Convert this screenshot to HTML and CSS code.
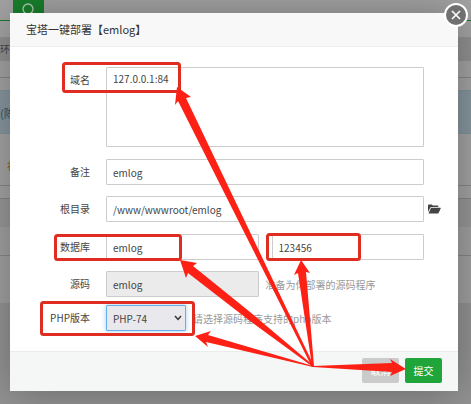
FILE: index.html
```html
<!DOCTYPE html>
<html lang="zh-CN">
<head>
    <meta charset="UTF-8">
    <meta name="viewport" content="width=device-width, initial-scale=1.0">
    <title>宝塔一键部署</title>
    <link rel="stylesheet" href="styles.css">
</head>
<body>
    <div class="page">
        <div class="page-search">
            <button class="search-btn" type="button" aria-label="搜索">
                <svg width="14" height="14" viewBox="0 0 14 14"><circle cx="6" cy="6" r="5"/><path d="M9.6 9.6L13.4 13.4"/></svg>
            </button>
        </div>
        <div class="page-gap"></div>
        <div class="page-tabs">环境</div>
        <div class="page-line"></div>
        <div class="page-tip">(陈</div>
        <div class="page-type">初</div>
        <div class="page-head"></div>
        <div class="page-row"></div>
        <div class="page-row tall"></div>
        <div class="page-rest"></div>
    </div>

    <div class="dialog" role="dialog" aria-labelledby="title">
        <button class="close" type="button" aria-label="关闭">
            <svg width="10" height="10" viewBox="0 0 10 10"><path d="M1 1L9 9M9 1L1 9"/></svg>
        </button>
        <h1 class="dialog-title" id="title">宝塔一键部署【emlog】</h1>
        <form>
            <div class="fields">
                <div class="line line-domain">
                    <label for="domain">域名</label>
                    <textarea id="domain">127.0.0.1:84</textarea>
                </div>
                <div class="line">
                    <label for="remark">备注</label>
                    <input class="wide" id="remark" type="text" value="emlog">
                </div>
                <div class="line line-path">
                    <label for="path">根目录</label>
                    <input class="wide" id="path" type="text" value="/www/wwwroot/emlog">
                    <svg class="folder" width="13" height="10" viewBox="0 0 13 10">
                        <path d="M0 8V1.4Q0 .6.8.6H3.8L4.8 1.6H9.6Q10.4 1.6 10.4 2.4V3H3.4Q2.7 3 2.4 3.6Z"/>
                        <path d="M.5 9.4L2.8 4.3Q3 3.8 3.6 3.8H12.4Q13 3.8 12.7 4.4L10.7 8.8Q10.4 9.4 9.8 9.4Z"/>
                    </svg>
                </div>
                <div class="line">
                    <label for="db">数据库</label>
                    <input class="half" id="db" type="text" value="emlog">
                    <input class="half" id="dbpass" type="text" value="123456" aria-label="数据库密码">
                </div>
                <div class="line line-source">
                    <label for="source">源码</label>
                    <input class="half" id="source" type="text" value="emlog" disabled>
                    <span class="note">准备为你部署的源码程序</span>
                </div>
                <div class="line">
                    <label for="php">PHP版本</label>
                    <span class="select">
                        <select id="php"><option>PHP-74</option></select>
                        <svg width="8" height="6" viewBox="0 0 8 6"><path d="M1 1L4 4.4L7 1"/></svg>
                    </span>
                    <span class="note">请选择源码程序支持的php版本</span>
                </div>
            </div>
            <div class="buttons">
                <button class="btn cancel" type="button">取消</button>
                <button class="btn submit" type="button">提交</button>
            </div>
        </form>
    </div>

    <svg class="marks" width="471" height="404" viewBox="0 0 471 404">
        <g class="boxes">
            <rect x="63.5" y="63.5" width="116" height="28" rx="2"/>
            <rect x="55.5" y="235.5" width="125" height="24" rx="2"/>
            <rect x="267.5" y="234.5" width="92" height="25" rx="2"/>
            <rect x="41.5" y="302.5" width="152" height="32" rx="2"/>
        </g>
        <g class="arrows">
            <path d="M177 87L191 97L186 98L314 366L312 367L178 101L175 105Z"/>
            <path d="M180 260L197 263L193 266L250 312L314 366L313 367L250 321L188 273L186 278Z"/>
            <path d="M301 260L310 273L306 272L314 366L312 366L298 273L294 275Z"/>
            <path d="M195 336L211 331L208 335L313 366L313 367L206 342L208 347Z"/>
            <path d="M406 369L390 376L392 372L313 367L313 366L392 363L390 359Z"/>
        </g>
    </svg>
</body>
</html>
```
FILE: styles.css
```css
* {
    box-sizing: border-box;
}
body {
    margin: 0;
    font-family: "Noto Sans CJK SC", sans-serif;
    font-size: 10px;
    color: #444;
    overflow: hidden;
}
button, input, select, textarea {
    font: inherit;
    color: inherit;
}

/* page behind the dialog */
.page {
    display: flex;
    flex-direction: column;
    min-height: 100vh;
    background: #a3a3a3;
}
.page-search {
    height: 21px;
    padding-left: 13px;
    border-bottom: 1px solid #1a7a2c;
}
.search-btn {
    display: block;
    width: 31px;
    height: 20px;
    padding: 0;
    border: 0;
    background: #17802b;
}
.search-btn svg {
    display: block;
    margin: 0 auto;
    fill: none;
    stroke: #b5c9b8;
    stroke-width: 1.3;
}
.page-gap {
    height: 16px;
}
.page-tabs {
    height: 24px;
    line-height: 24px;
    background: #919191;
}
.page-line {
    height: 29px;
    background: linear-gradient(#a3a3a3 16px, #858585 16px, #858585 17px, #a3a3a3 17px);
}
.page-tip {
    height: 44px;
    line-height: 44px;
    font-size: 11px;
    color: #2c5266;
    background: #87969e;
    border: solid #7d939c;
    border-width: 1px 0;
}
.page-type {
    height: 52px;
    padding: 24px 0 0 7px;
    color: #9a5a14;
    border-bottom: 1px solid #858585;
}
.page-head {
    height: 13px;
    border-bottom: 1px solid #858585;
}
.page-row {
    height: 28px;
    background: #979797;
}
.page-row.tall {
    height: 76px;
    background: linear-gradient(#a0a0a0 28px, #868686 28px, #868686 29px, #a0a0a0 29px);
}
.page-rest {
    flex: 1;
    background: #939393;
}

.dialog {
    position: absolute;
    top: 13px;
    left: 10px;
    right: 13px;
    background: #fff;
    box-shadow: 1px 1px 40px rgba(0, 0, 0, .3);
}
.close {
    position: absolute;
    top: -10px;
    right: -10px;
    display: flex;
    align-items: center;
    justify-content: center;
    width: 24px;
    height: 24px;
    padding: 0;
    border: 2px solid #fff;
    border-radius: 50%;
    background: #707070;
}
.close svg {
    fill: none;
    stroke: #fff;
    stroke-width: 1.6;
}
.dialog-title {
    height: 34px;
    margin: 0;
    padding-left: 16px;
    line-height: 33px;
    font-size: 11px;
    font-weight: normal;
    color: #333;
    background: #f8f8f8;
    border-bottom: 1px solid #eee;
}
.fields {
    padding: 20px 34px 20px 0;
}
.line {
    display: flex;
    align-items: center;
    margin-bottom: 11px;
}
.line:last-child {
    margin-bottom: 0;
}
.line-domain {
    align-items: flex-start;
}
.line-domain, .line-path {
    margin-bottom: 12px;
}
.line-source {
    margin-bottom: 8px;
}
.line label {
    width: 80px;
    margin-right: 16px;
    line-height: 26px;
    text-align: right;
}
.line input, .line textarea, .line select {
    height: 26px;
    padding: 0 6px;
    border: 1px solid #ccc;
    border-radius: 1px;
    background: #fff;
    outline: 0;
}
.line textarea {
    flex: 1;
    height: 80px;
    padding-top: 3px;
    line-height: 15px;
    resize: none;
}
.line .wide {
    flex: 1;
    min-width: 0;
}
.line .half {
    flex: 1;
    min-width: 0;
}
.line .half + .half {
    margin-left: 13px;
}
.line input:disabled {
    background: #ebebeb;
}
.folder {
    margin: 0 -17px 0 4px;
    fill: #444;
}
.note {
    flex: 1;
    margin-left: 7px;
    padding-right: 20px;
    color: #999;
    white-space: nowrap;
}
.select {
    position: relative;
}
.line select {
    display: block;
    width: 80px;
    appearance: none;
    background: #e9e9ed;
    border-color: #66afe9;
    box-shadow: 0 0 5px rgba(102, 175, 233, .6);
}
.select svg {
    position: absolute;
    top: 10px;
    right: 4px;
    fill: none;
    stroke: #333;
    stroke-width: 1.5;
    pointer-events: none;
}
.buttons {
    display: flex;
    justify-content: flex-end;
    gap: 6px;
    padding: 6px 16px 8px;
    background: #f5f7f7;
    border-top: 1px solid #eaecec;
}
.btn {
    width: 37px;
    height: 25px;
    padding: 0;
    border: 0;
    border-radius: 2px;
    color: #fff;
}
.cancel {
    background: #cbcbcb;
}
.submit {
    background: #20a53a;
}

/* red marks over the form */
.marks {
    position: absolute;
    top: 0;
    left: 0;
    pointer-events: none;
}
.boxes {
    fill: none;
    stroke: #e02d22;
    stroke-width: 3;
}
.arrows {
    fill: #fd2015;
}
```
